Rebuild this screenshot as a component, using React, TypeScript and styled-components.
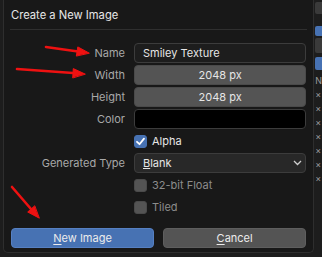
import styled, { createGlobalStyle } from 'styled-components';

const Global = createGlobalStyle`
  html, body { margin: 0; padding: 0; background: #1d1d1d; }
  body { font-family: Inter, "DejaVu Sans", sans-serif; }
`;

const Page = styled.div`
  position: relative;
  width: 322px;
  height: 257px;
  overflow: hidden;
  display: flex;
  background: #1d1d1d;
`;

const Dialog = styled.div`
  margin-left: 3px;
  width: 314px;
  height: 253px;
  box-sizing: border-box;
  background: #181818;
  border: 1px solid #2e2e2e;
  border-top: none;
  border-radius: 0 0 5px 5px;
  display: flex;
  flex-direction: column;
  padding: 0 7px;
`;

const Title = styled.div`
  height: 29px;
  display: flex;
  align-items: center;
  font-size: 11.2px;
  color: #e6e6e6;
`;

const Separator = styled.div`
  height: 1px;
  margin: 0 -1px;
  background: #2f2f2f;
`;

const Form = styled.div`
  margin-top: 13px;
  display: grid;
  grid-template-columns: 114px 1fr;
  grid-auto-rows: 20px;
  column-gap: 9px;
  row-gap: 2px;
`;

const Label = styled.div`
  display: flex;
  align-items: center;
  justify-content: flex-end;
  font-size: 11px;
  color: #a8a8a8;
`;

const Field = styled.div<{ $kind: 'text' | 'number' | 'color' | 'menu' }>`
  box-sizing: border-box;
  display: flex;
  align-items: center;
  border-radius: 4px;
  font-size: 11px;
  color: #e6e6e6;
  padding: ${p => (p.$kind === 'menu' ? '0 3px 0 8px' : '0 8px')};
  justify-content: ${p => (p.$kind === 'number' ? 'center' : 'space-between')};
  background: ${p =>
    p.$kind === 'number' ? '#545454' : p.$kind === 'color' ? '#000000' : p.$kind === 'menu' ? '#282828' : '#1d1d1d'};
  border: 1px solid ${p => (p.$kind === 'number' ? '#4a4a4a' : '#3c3c3c')};
`;

const CheckRow = styled.label<{ $muted?: boolean }>`
  display: flex;
  align-items: center;
  gap: 5px;
  font-size: 11px;
  color: ${p => (p.$muted ? '#8c8c8c' : '#e6e6e6')};
`;

const Box = styled.span<{ $on?: boolean }>`
  width: 13px;
  height: 13px;
  border-radius: 3px;
  display: flex;
  align-items: center;
  justify-content: center;
  background: ${p => (p.$on ? '#4772b3' : '#545454')};
  border: 1px solid ${p => (p.$on ? '#4772b3' : '#4a4a4a')};
  box-sizing: border-box;
`;

const Buttons = styled.div`
  margin-top: 11px;
  display: grid;
  grid-template-columns: 1fr 1fr;
  column-gap: 9px;
  height: 20px;
`;

const Button = styled.div<{ $primary?: boolean }>`
  display: flex;
  align-items: center;
  justify-content: center;
  border-radius: 4px;
  font-size: 11px;
  color: #ececec;
  background: ${p => (p.$primary ? '#4772b3' : '#545454')};
  border: 1px solid ${p => (p.$primary ? '#5680c2' : '#5e5e5e')};
  box-sizing: border-box;
  u { text-underline-offset: 2px; }
`;

const Strip = styled.div`
  flex: 1;
  display: flex;
  flex-direction: column;
  padding-left: 1px;
`;

const Block = styled.div<{ $h: number; $top: number; $color: string }>`
  height: ${p => p.$h}px;
  margin-top: ${p => p.$top}px;
  background: ${p => p.$color};
  border-radius: 2px 0 0 2px;
`;

const StripText = styled.div<{ $top: number }>`
  margin-top: ${p => p.$top}px;
  font-size: 9px;
  line-height: 9px;
  color: #9a9a9a;
`;

const Arrows = styled.svg`
  position: absolute;
  left: 0;
  top: 0;
  pointer-events: none;
`;

const Chevron = () => (
  <svg width="9" height="6" viewBox="0 0 9 6">
    <polyline points="1,1 4.5,4.5 8,1" fill="none" stroke="#cfcfcf" strokeWidth="1.3" />
  </svg>
);

const Tick = () => (
  <svg width="11" height="11" viewBox="0 0 11 11">
    <polyline points="2,5.8 4.5,8.2 9,2.6" fill="none" stroke="#ffffff" strokeWidth="1.8" strokeLinecap="round" strokeLinejoin="round" />
  </svg>
);

export default function App() {
  return (
    <Page>
      <Global />
      <Dialog>
        <Title>Create a New Image</Title>
        <Separator />
        <Form>
          <Label>Name</Label>
          <Field $kind="text">Smiley Texture</Field>
          <Label>Width</Label>
          <Field $kind="number">2048 px</Field>
          <Label>Height</Label>
          <Field $kind="number">2048 px</Field>
          <Label>Color</Label>
          <Field $kind="color" />
          <Label />
          <CheckRow>
            <Box $on>
              <Tick />
            </Box>
            Alpha
          </CheckRow>
          <Label>Generated Type</Label>
          <Field $kind="menu">
            <span>
              <u>B</u>lank
            </span>
            <Chevron />
          </Field>
          <Label />
          <CheckRow $muted>
            <Box />
            32-bit Float
          </CheckRow>
          <Label />
          <CheckRow $muted>
            <Box />
            Tiled
          </CheckRow>
        </Form>
        <Buttons>
          <Button $primary>
            <span>
              <u>N</u>ew Image
            </span>
          </Button>
          <Button>
            <span>
              <u>C</u>ancel
            </span>
          </Button>
        </Buttons>
      </Dialog>
      <Strip>
        <Block $h={12} $top={2} $color="#3a3a3a" />
        <Block $h={10} $top={12} $color="#4772b3" />
        <Block $h={15} $top={2} $color="#3a3a3a" />
        <Block $h={13} $top={4} $color="#4772b3" />
        <StripText $top={6}>N</StripText>
        <StripText $top={5}>×</StripText>
        <StripText $top={5}>×</StripText>
        <StripText $top={5}>×</StripText>
        <StripText $top={5}>×</StripText>
        <StripText $top={5}>×</StripText>
        <StripText $top={5}>×</StripText>
        <StripText $top={5}>×</StripText>
      </Strip>
      <Arrows width="322" height="257" viewBox="0 0 322 257">
        <g fill="#ee1111" stroke="#ee1111" strokeLinecap="round">
          <line x1="46" y1="47" x2="78" y2="51.5" strokeWidth="2.6" />
          <polygon points="89,53 77.8,46.9 76.4,55.7" strokeWidth="1" />
          <line x1="17" y1="69" x2="73" y2="73" strokeWidth="2.6" />
          <polygon points="85,74 73.3,68.6 72.7,77.6" strokeWidth="1" />
          <line x1="12" y1="187" x2="31" y2="209" strokeWidth="2.6" />
          <polygon points="39,218 27.7,212 34.5,206" strokeWidth="1" />
        </g>
      </Arrows>
    </Page>
  );
}
